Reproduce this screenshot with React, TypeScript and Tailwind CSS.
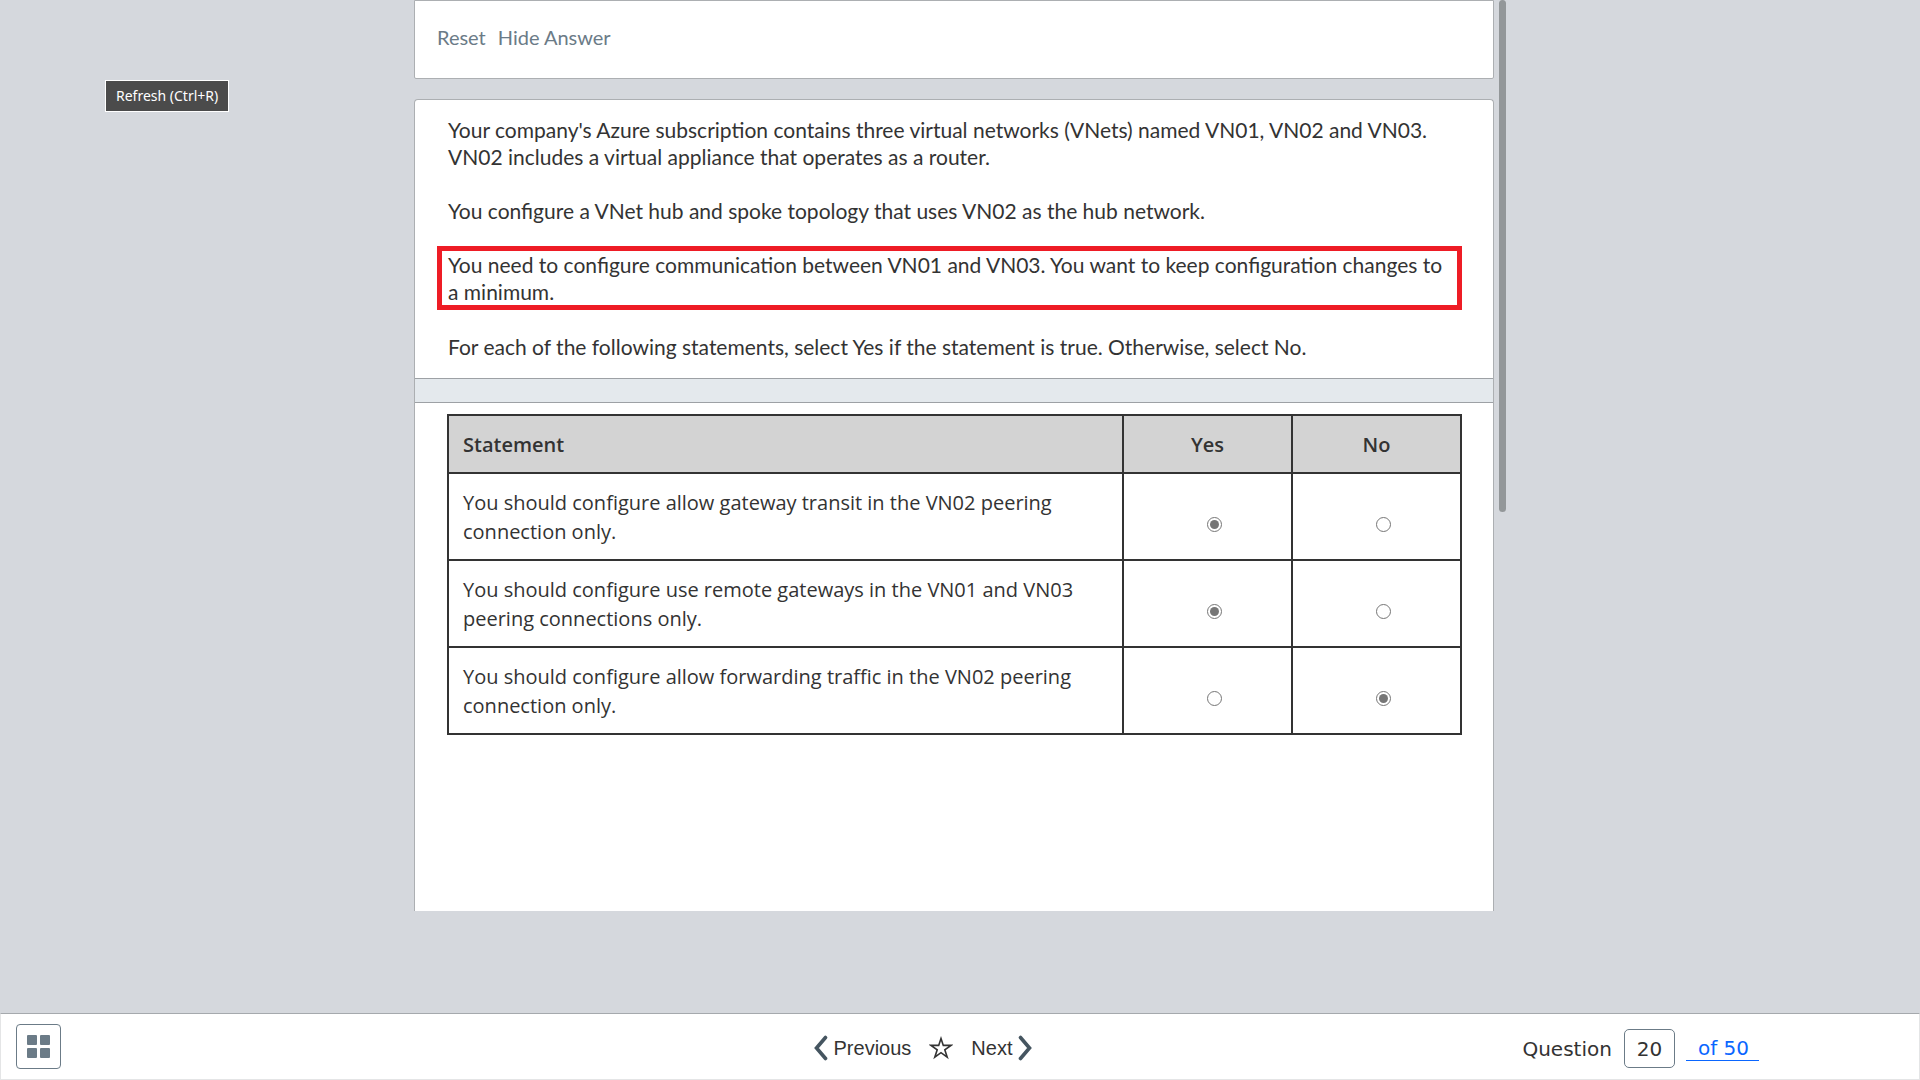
import { useState } from "react";

const rows = [
  {
    text: "You should configure allow gateway transit in the VN02 peering connection only.",
    answer: "Yes",
  },
  {
    text: "You should configure use remote gateways in the VN01 and VN03 peering connections only.",
    answer: "Yes",
  },
  {
    text: "You should configure allow forwarding traffic in the VN02 peering connection only.",
    answer: "No",
  },
];

function Toolbar() {
  return (
    <div className="flex h-[79px] items-center gap-3 rounded-b-xs border border-[#acafb2] bg-white px-[22px] pb-[5px] font-['Lato',sans-serif] text-[20px] text-[#6b7b87]">
      <button type="button">Reset</button>
      <button type="button">Hide Answer</button>
    </div>
  );
}

function Prompt() {
  return (
    <div className="px-[33px] pt-4 pb-[18px] font-['Lato',sans-serif] text-[21px] leading-[27px] text-[#333]">
      <p>
        Your company's Azure subscription contains three virtual networks (VNets) named VN01, VN02 and VN03.
        <br />
        VN02 includes a virtual appliance that operates as a router.
      </p>
      <p className="mt-[27px]">
        You configure a VNet hub and spoke topology that uses VN02 as the hub network.
      </p>
      <p className="-mr-[2px] mt-[22px] -ml-[11px] border-5 border-[#ee1c25] pl-[6px]">
        You need to configure communication between VN01 and VN03. You want to keep configuration changes to
        <br />a minimum.
      </p>
      <p className="mt-[23px]">
        For each of the following statements, select Yes if the statement is true. Otherwise, select No.
      </p>
    </div>
  );
}

function StatementTable() {
  const [answers, setAnswers] = useState(rows.map((r) => r.answer));
  return (
    <table className="w-full border-collapse border-2 border-[#333] font-['Open_Sans',sans-serif] text-[20px] leading-[29px] text-[#333]">
      <thead>
        <tr className="h-[58px] bg-[#d3d3d3]">
          <th scope="col" className="border-2 border-[#333] px-[14px] text-left font-semibold">
            Statement
          </th>
          <th scope="col" className="w-[169px] border-2 border-[#333] font-semibold">
            Yes
          </th>
          <th scope="col" className="w-[169px] border-2 border-[#333] font-semibold">
            No
          </th>
        </tr>
      </thead>
      <tbody>
        {rows.map((row, i) => (
          <tr key={row.text} className="h-[87px]">
            <td className="border-2 border-[#333] px-[14px]">{row.text}</td>
            {["Yes", "No"].map((choice) => (
              <td key={choice} className="border-2 border-[#333] pt-4 pl-[14px]">
                <input
                  type="radio"
                  name={`statement-${i}`}
                  aria-label={`${choice}: ${row.text}`}
                  checked={answers[i] === choice}
                  onChange={() => setAnswers(answers.map((a, j) => (j === i ? choice : a)))}
                  className="mx-auto block size-[15px] appearance-none rounded-full border border-[#767676] bg-white bg-clip-content p-[2px] checked:bg-[#767676]"
                />
              </td>
            ))}
          </tr>
        ))}
      </tbody>
    </table>
  );
}

function Chevron({ d }: { d: string }) {
  return (
    <svg width="14" height="26" viewBox="0 0 14 26" fill="none" stroke="#455560" strokeWidth="3.6" strokeLinecap="round" aria-hidden="true">
      <path d={d} />
    </svg>
  );
}

function Footer() {
  return (
    <footer className="grid h-[67px] grid-cols-[1fr_auto_1fr] items-center border border-t-[#a5a9ad] border-[#e4e5e6] bg-white pr-[74px] text-[20px] text-[#333]">
      <div className="pl-[15px]">
        <button
          type="button"
          aria-label="Question overview"
          className="grid size-[45px] grid-cols-[10px_10px] place-content-center gap-[3px] rounded border border-[#6b7b87]"
        >
          <span className="size-[10px] rounded-[1px] bg-[#6b7b87]" />
          <span className="size-[10px] rounded-[1px] bg-[#6b7b87]" />
          <span className="size-[10px] rounded-[1px] bg-[#6b7b87]" />
          <span className="size-[10px] rounded-[1px] bg-[#6b7b87]" />
        </button>
      </div>
      <div className="flex items-center gap-[18px] pt-[2px] font-['Liberation_Sans',sans-serif]">
        <button type="button" className="flex items-center gap-[6px]">
          <Chevron d="M11.5 2.5 L2.5 13 L11.5 23.5" />
          Previous
        </button>
        <button type="button" aria-label="Mark question">
          <svg width="24" height="24" viewBox="0 0 24 24" fill="none" stroke="#333" strokeWidth="1.6" aria-hidden="true">
            <path d="M12 2.5 L14.3 9.4 H22 L15.8 13.8 L18.2 21.2 L12 16.7 L5.8 21.2 L8.2 13.8 L2 9.4 H9.7 Z" />
          </svg>
        </button>
        <button type="button" className="flex items-center gap-[6px]">
          Next
          <Chevron d="M2.5 2.5 L11.5 13 L2.5 23.5" />
        </button>
      </div>
      <div className="flex items-center justify-end pt-1 pr-[86px] font-['DejaVu_Sans',sans-serif]">
        <label htmlFor="question-number">Question</label>
        <input
          id="question-number"
          type="text"
          defaultValue="20"
          className="ml-3 h-[39px] w-[51px] rounded-[5px] border border-[#6b7b87] text-center"
        />
        <a href="#questions" className="ml-[11px] border-b border-[#0a66ff] pr-[10px] pl-3 leading-6 text-[#0a66ff]">
          of 50
        </a>
      </div>
    </footer>
  );
}

export default function App() {
  return (
    <div className="relative flex h-screen flex-col bg-[#d5d8dd]">
      <div
        role="tooltip"
        className="absolute top-[80px] left-[105px] border border-white bg-[#4b4b4b] px-[10px] font-['Noto_Sans',sans-serif] text-[14px] leading-[30px] text-white"
      >
        Refresh (Ctrl+R)
      </div>
      <div className="mx-auto flex w-full max-w-[1092px] flex-1 gap-[5px] pb-[102px]">
        <main className="flex flex-1 flex-col">
          <Toolbar />
          <section className="mt-5 flex-1 rounded-t border border-b-0 border-[#acafb2] bg-white">
            <Prompt />
            <div className="h-[25px] border-y border-[#9da1a5] bg-[#e4e9ed]" />
            <div className="pt-[11px] pr-[31px] pl-8">
              <StatementTable />
            </div>
          </section>
        </main>
        <div className="h-[512px] w-[7px] rounded-full bg-[#939799]" />
      </div>
      <Footer />
    </div>
  );
}
